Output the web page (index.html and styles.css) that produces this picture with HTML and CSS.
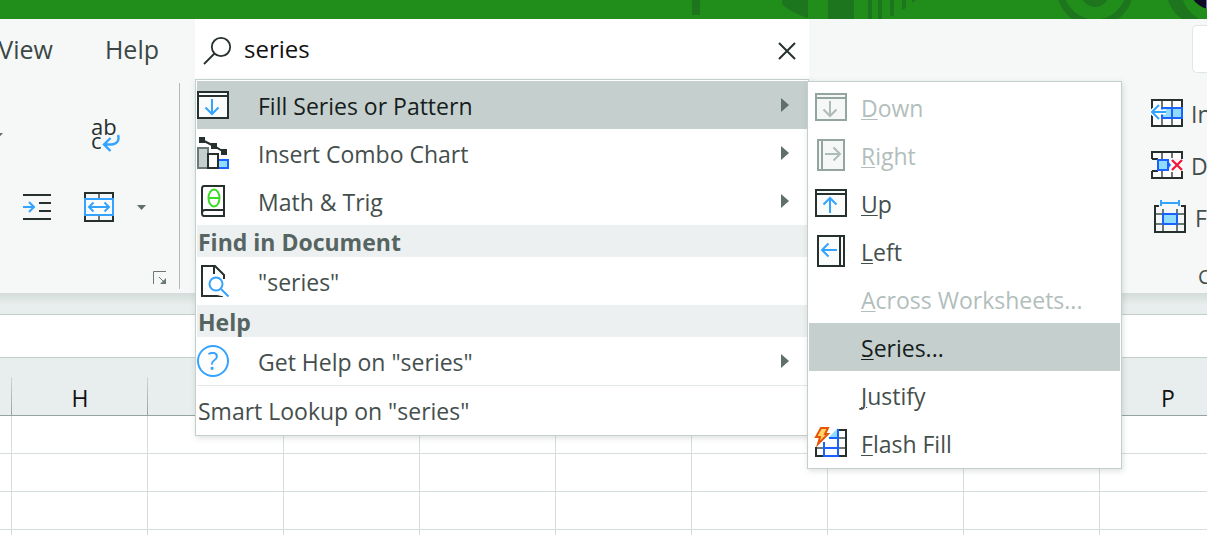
FILE: index.html
```html
<!DOCTYPE html>
<html lang="en">
<head>
<meta charset="utf-8">
<title>Workbook</title>
<link rel="stylesheet" href="styles.css">
</head>
<body>
<header class="titlebar">
  <svg class="titlebar-art" width="527" height="19" viewBox="0 0 527 19" aria-hidden="true">
    <g fill="#1d761d">
      <path d="M12 0h8v15h-8zM102 0h26v18c-8-2-20-8-26-14zM148 0h26v19h-26zM188 0h4v19h-4zM198 0h4v19h-4zM210 0h4v15l-4 2zM222 0h4v8l-4 2zM232 0h4l-4 3z"/>
      <circle cx="415" cy="-7" r="14"/>
      <path d="M488 0h15c3 8 8 14 16 19h-17c-7-5-12-12-14-19z"/>
    </g>
    <circle cx="415" cy="-12" r="35" fill="none" stroke="#1d761d" stroke-width="7"/>
    <circle cx="531" cy="-12" r="21" fill="#0d0c25"/>
    <path d="M526 0h1v9h-1z" fill="#7a78c8"/>
  </svg>
</header>

<div class="ribbon">
  <div class="ribbon-left">
    <nav class="tabs"><a class="tab" href="#view">View</a><a class="tab" href="#help">Help</a></nav>
    <div class="group">
      <div class="tools tools-top">
        <button class="tool" aria-label="Orientation options"><svg width="9" height="5" viewBox="0 0 9 5"><path d="M0 0h9L4.500 5z" fill="#5f6f6d"/></svg></button>
        <button class="tool" aria-label="Wrap text">
          <svg width="32" height="40" viewBox="0 0 32 40">
            <text class="glyph" x="2" y="20">ab</text><text class="glyph" x="2" y="34">c</text>
            <path d="M29 20c2 6-2 9.500-7 9.500h-7M21.500 23l-6.500 6.500 6.500 6.500" fill="none" stroke="#33a3ff" stroke-width="2.400"/>
          </svg>
        </button>
      </div>
      <div class="tools tools-bottom">
        <button class="tool" aria-label="Increase indent">
          <svg width="32" height="40" viewBox="0 0 32 40" fill="none" stroke-width="2">
            <path d="M2 8h28M18 16h12M18 24h12M2 32h28" stroke="#26302e"/>
            <path d="M2 20h11M8 15l5 5-5 5" stroke="#33a3ff"/>
          </svg>
        </button>
        <button class="tool" aria-label="Merge and center">
          <svg width="32" height="40" viewBox="0 0 32 40" fill="none" stroke-width="2">
            <path d="M16 6v6M16 28v6" stroke="#6b7876"/>
            <path d="M2 12V6h28v6M2 28v6h28v-6" stroke="#26302e"/>
            <rect x="2" y="12" width="28" height="16" fill="#fafcfc" stroke="#33a3ff"/>
            <path d="M6 20h20M10.500 15.500L6 20l4.500 4.500M21.500 15.500L26 20l-4.500 4.500" stroke="#33a3ff"/>
          </svg>
        </button>
        <button class="tool" aria-label="Merge options"><svg width="9" height="5" viewBox="0 0 9 5"><path d="M0 0h9L4.500 5z" fill="#5f6f6d"/></svg></button>
      </div>
      <button class="tool launcher" aria-label="Alignment settings">
        <svg width="14" height="14" viewBox="0 0 14 14"><path d="M.5 13V.5H13M6 6l6 6" fill="none" stroke="#6b7876"/><path d="M13 7v6H7z" fill="#6b7876"/></svg>
      </button>
    </div>
  </div>

  <div class="search">
    <div class="search-box">
      <svg width="30" height="30" viewBox="0 0 30 30" fill="none" stroke="#26302e" stroke-width="1.800" aria-hidden="true"><circle cx="18" cy="11" r="9.200"/><path d="M11.500 17.500L1 28"/></svg>
      <input class="search-input" type="text" value="series" aria-label="Search">
      <button class="tool" aria-label="Clear search"><svg width="18" height="18" viewBox="0 0 18 18"><path d="M1 1l16 16M17 1L1 17" stroke="#26302e" stroke-width="2"/></svg></button>
    </div>

    <div class="menu results">
      <button class="item selected">
        <svg class="icon" viewBox="0 0 32 32"><path d="M1 3h30v26H1zM1 7h30" fill="#fafcfc" stroke="#26302e" stroke-width="2"/><path d="M15 10v15M8.500 18.500L15 25l6.500-6.500" fill="none" stroke="#33a3ff" stroke-width="2"/></svg>
        <span class="label">Fill Series or Pattern</span><span class="arrow"></span>
      </button>
      <button class="item">
        <svg class="icon" viewBox="0 0 32 32" stroke-width="2"><path d="M1 11h10v20H1z" fill="#c5d0ce" stroke="#6b7876"/><path d="M11 17h10v14H11z" fill="#fff" stroke="#26302e"/><path d="M22 23h9v8h-9" fill="#8fdcff" stroke="#1a62ff"/><path d="M5 3l12 6 10 6" fill="none" stroke="#26302e"/><path d="M2 0h6v6H2zM14 6h6v6h-6zM24 12h6v6h-6z" fill="#26302e"/></svg>
        <span class="label">Insert Combo Chart</span><span class="arrow"></span>
      </button>
      <button class="item">
        <svg class="icon" viewBox="0 0 32 32" fill="none" stroke-width="2"><path d="M27 1H7Q5 1 5 4v24q0 3 2 3h20zM5 28q0-3 3-3h19" stroke="#26302e"/><path d="M11.500 13h11" stroke="#3bdc28"/><ellipse cx="17" cy="13" rx="5.500" ry="8.500" stroke="#3bdc28"/></svg>
        <span class="label">Math &amp; Trig</span><span class="arrow"></span>
      </button>
      <h2 class="heading">Find in Document</h2>
      <button class="item">
        <svg class="icon" viewBox="0 0 32 32" fill="none" stroke-width="2"><path d="M26 31H5V1h13l9 9v4M17 1v8" stroke="#26302e"/><path d="M20 30l9 2V14h-2v9" fill="#fff" stroke="none"/><circle cx="19" cy="19" r="6.500" fill="#fff" stroke="#33a3ff"/><path d="M24 24l7.500 7.500" stroke="#33a3ff"/></svg>
        <span class="label">"series"</span>
      </button>
      <h2 class="heading">Help</h2>
      <button class="item">
        <svg class="icon" viewBox="0 0 32 32"><circle cx="16" cy="16" r="15" fill="none" stroke="#33a3ff" stroke-width="2"/><text class="question" x="16" y="25">?</text></svg>
        <span class="label">Get Help on "series"</span><span class="arrow"></span>
      </button>
      <button class="item divided"><span class="label">Smart Lookup on "series"</span></button>
    </div>

    <div class="menu submenu">
      <button class="item" disabled>
        <svg class="icon" viewBox="0 0 32 32" stroke-width="2"><path d="M1 3h30v26H1zM1 7h30" fill="#f6f8f8" stroke="#93a4a1"/><path d="M15 10v15M8.500 18.500L15 25l6.500-6.500" fill="none" stroke="#aebbb9"/></svg>
        <span class="label"><u>D</u>own</span>
      </button>
      <button class="item" disabled>
        <svg class="icon" viewBox="0 0 32 32" stroke-width="2"><path d="M3 1h26v30H3zM7 1v30" fill="#f6f8f8" stroke="#93a4a1"/><path d="M10 15h15M18.500 8.500L25 15l-6.500 6.500" fill="none" stroke="#aebbb9"/></svg>
        <span class="label"><u>R</u>ight</span>
      </button>
      <button class="item">
        <svg class="icon" viewBox="0 0 32 32" stroke-width="2"><path d="M1 3h30v26H1zM1 7h30" fill="#fafcfc" stroke="#26302e"/><path d="M15 26V11M8.500 17.500L15 11l6.500 6.500" fill="none" stroke="#33a3ff"/></svg>
        <span class="label"><u>U</u>p</span>
      </button>
      <button class="item">
        <svg class="icon" viewBox="0 0 32 32" stroke-width="2"><path d="M3 1h26v30H3zM25 1v30" fill="#fafcfc" stroke="#26302e"/><path d="M22 15H7M13.500 8.500L7 15l6.500 6.500" fill="none" stroke="#33a3ff"/></svg>
        <span class="label"><u>L</u>eft</span>
      </button>
      <button class="item" disabled><span class="icon"></span><span class="label"><u>A</u>cross Worksheets...</span></button>
      <button class="item selected"><span class="icon"></span><span class="label"><u>S</u>eries...</span></button>
      <button class="item"><span class="icon"></span><span class="label"><u>J</u>ustify</span></button>
      <button class="item">
        <svg class="icon" viewBox="0 0 32 32" fill="none" stroke-width="2"><path d="M13 11L23 1v10z" fill="#8fdcff"/><path d="M24 11h7M24 21h7M1 21h8" stroke="#6b7876"/><path d="M24 3h7v26h-7M9 29H1v-9" stroke="#26302e"/><path d="M23 2v28M9 15v15M14 11h9M9 21h14M9 29h14" stroke="#1a62ff"/><path d="M6 1h7l-3 6h3L3 17l2-7H1z" fill="#ffd76b" stroke="#e85407" stroke-width="2"/></svg>
        <span class="label"><u>F</u>lash Fill</span>
      </button>
    </div>
  </div>

  <div class="ribbon-right">
    <div class="actions"><button class="action" aria-label="Comments"></button></div>
    <div class="cells">
      <button class="cell-tool">
        <svg width="32" height="32" viewBox="0 0 32 32" fill="none" stroke-width="2"><path d="M1 3h30v26H1z" fill="#fff" stroke="#26302e"/><path d="M11 4v24M21 4v24" stroke="#6b7876"/><path d="M11 11h20v10H11z" fill="#8fdcff" stroke="#1a62ff"/><path d="M21 11v10" stroke="#1a62ff"/><path d="M0 15h15M8 8l-7 7 7 7" stroke="#fff" stroke-width="5"/><path d="M1 15h14M8 8l-7 7 7 7" stroke="#33a3ff"/></svg>
        <span>Insert</span>
      </button>
      <button class="cell-tool">
        <svg width="32" height="32" viewBox="0 0 32 32" fill="none" stroke-width="2"><path d="M1 10V3h30v7M1 22v7h30v-7" fill="#fff" stroke="#26302e"/><path d="M11 4v6M21 4v5M11 22v6M21 23v5" stroke="#6b7876"/><path d="M1 10h6M1 22h6" stroke="#26302e"/><path d="M7 11h10v10H7z" fill="#8fdcff" stroke="#1a62ff"/><path d="M17 12l3 4-3 4z" fill="#1a62ff"/><path d="M21 11l10 10M31 11L21 21" stroke="#fff" stroke-width="5"/><path d="M21 11l10 10M31 11L21 21" stroke="#f0193c" stroke-width="2.400"/></svg>
        <span>Delete</span>
      </button>
      <button class="cell-tool">
        <svg width="36" height="32" viewBox="0 0 36 32" fill="none" stroke-width="2"><path d="M8 5H4v26h30V5h-4" stroke="#26302e"/><path d="M12 8v22M26 8v22M5 13h28M5 23h28" stroke="#6b7876"/><path d="M12 13h14v10H12z" fill="#8fdcff" stroke="#1a62ff"/><path d="M10 2h18M10-1v6M28-1v6" stroke="#33a3ff"/></svg>
        <span>Format</span>
      </button>
      <span class="group-name">Cells</span>
    </div>
  </div>
</div>

<div class="formula-area"><input class="formula" type="text" aria-label="Formula bar"></div>

<main class="sheet">
  <table class="grid">
    <thead><tr><th class="edge"></th><th>H</th><th>I</th><th>J</th><th>K</th><th>L</th><th>M</th><th>N</th><th>O</th><th>P</th></tr></thead>
    <tbody>
      <tr><td></td><td></td><td></td><td></td><td></td><td></td><td></td><td></td><td></td><td></td></tr>
      <tr><td></td><td></td><td></td><td></td><td></td><td></td><td></td><td></td><td></td><td></td></tr>
      <tr><td></td><td></td><td></td><td></td><td></td><td></td><td></td><td></td><td></td><td></td></tr>
      <tr><td></td><td></td><td></td><td></td><td></td><td></td><td></td><td></td><td></td><td></td></tr>
    </tbody>
  </table>
</main>
</body>
</html>
```

FILE: styles.css
```css
* { box-sizing: border-box; }

body {
  margin: 0;
  height: 100vh;
  overflow: hidden;
  display: flex;
  flex-direction: column;
  background: #fff;
  color: #444f4d;
  font-family: "Open Sans", "Noto Sans", sans-serif;
  font-size: 23px;
  line-height: 32px;
}

button, input {
  font: inherit;
  color: inherit;
  margin: 0;
  padding: 0;
  border: 0;
  background: none;
}

svg { display: block; flex: none; overflow: visible; }

.titlebar {
  flex: none;
  display: flex;
  justify-content: flex-end;
  overflow: hidden;
  background: #218d1b;
}

.ribbon {
  flex: none;
  display: grid;
  grid-template-columns: 195px 614px minmax(0, 1fr);
  background: #f6f8f8;
}

.ribbon-left, .ribbon-right { overflow: hidden; }

.tabs {
  display: flex;
  justify-content: flex-end;
  gap: 52px;
  height: 64px;
  padding: 14px 36px 0 0;
  font-size: 25px;
}

.tab { color: #3c4745; text-decoration: none; }

.group {
  display: flex;
  flex-direction: column;
  width: 180px;
  height: 206px;
  margin-bottom: 4px;
  padding-top: 32px;
  border-right: 1px solid #aebbb9;
}

.tools { display: flex; justify-content: flex-end; align-items: center; }
.tools-top { gap: 86px; padding-right: 58px; }
.tools-bottom { gap: 22px; margin-top: 32px; padding-right: 33px; }
.tools-bottom .tool:first-child { margin-right: 8px; }
.launcher { align-self: flex-end; margin: auto 12px 4px 0; }
.glyph { font-size: 22px; fill: #26302e; }
.question { font-size: 25px; fill: #33a3ff; text-anchor: middle; }

.search { position: relative; z-index: 1; }

.search-box {
  display: flex;
  align-items: center;
  height: 61px;
  padding: 2px 13px 0 8px;
  background: #fff;
}

.search-input {
  flex: 1;
  min-width: 0;
  padding: 0 0 4px 11px;
  color: #111;
  font-size: 24px;
  outline: none;
}

.menu {
  position: absolute;
  padding: 1px;
  border: 1px solid #c3cfcc;
  background: #fff;
  box-shadow: 1px 2px 6px #3c57502e;
}

.results { top: 60px; left: 0; right: 0; }
.submenu { top: 62px; left: calc(100% - 2px); width: 315px; }

.item {
  display: flex;
  align-items: center;
  width: 100%;
  height: 48px;
  text-align: left;
  white-space: nowrap;
}

.item:disabled { color: #b2bebc; }
.item.selected { background: #c5d0ce; color: #161d1c; }
.item.divided { height: 49px; border-top: 1px solid #e2e9e8; }
.icon { flex: none; width: 32px; height: 32px; }
.label { flex: 1; padding-top: 1px; }
.results .label { padding-left: 29px; }
.results .divided .label { padding-left: 1px; }
.submenu .item { padding-left: 6px; }
.submenu .label { padding-left: 14px; }
.label u { text-decoration-thickness: 1px; text-underline-offset: 2px; }

.arrow {
  margin-right: 18px;
  border: solid transparent;
  border-width: 7px 0 7px 8px;
  border-left-color: #5f6f6d;
}

.heading {
  margin: 0;
  height: 32px;
  padding: 1px 0 0 1px;
  background: #ecf0f0;
  color: #566462;
  font-size: 23px;
  font-weight: 700;
}

.actions { display: flex; justify-content: flex-end; padding: 6px 0 24px; }
.action {
  width: 15px;
  height: 48px;
  border: 1px solid #dfe6e4;
  border-right: 0;
  border-radius: 5px 0 0 5px;
  background: #fff;
}

.cells {
  display: flex;
  flex-direction: column;
  gap: 20px;
  width: 56px;
  margin-left: auto;
}

.cell-tool { display: flex; gap: 8px; height: 32px; white-space: nowrap; }
.cell-tool span { padding-top: 1px; }
.group-name { padding: 8px 0 0 47px; font-size: 20px; }

.formula-area {
  flex: none;
  padding-top: 21px;
  background: linear-gradient(#d3dcda, #e8eeed 12px);
}

.formula {
  display: block;
  width: 100%;
  height: 44px;
  border: solid #c3cfcc;
  border-width: 1px 0;
  background: #fff;
}

.sheet { flex: 1; min-height: 0; overflow: hidden; }

.grid {
  width: 1236px;
  table-layout: fixed;
  border-spacing: 0;
}

.grid .edge { width: 12px; }

.grid th {
  height: 58px;
  padding: 22px 0 0;
  border-bottom: 1px solid #93a4a1;
  background:
    linear-gradient(#cdd6d4, #93a4a1) right bottom / 1px 38px no-repeat,
    #e8eeed;
  color: #111;
  font-weight: 400;
}

.grid td {
  height: 38px;
  padding: 0;
  border: solid #d6dedc;
  border-width: 0 1px 1px 0;
}
```
